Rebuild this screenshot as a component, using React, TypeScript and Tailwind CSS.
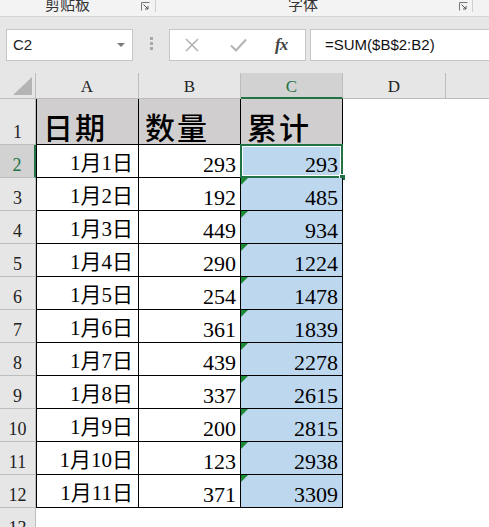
import React from "react";

const ROWS: [string, number, number][] = [
  ["1月1日", 293, 293],
  ["1月2日", 192, 485],
  ["1月3日", 449, 934],
  ["1月4日", 290, 1224],
  ["1月5日", 254, 1478],
  ["1月6日", 361, 1839],
  ["1月7日", 439, 2278],
  ["1月8日", 337, 2615],
  ["1月9日", 200, 2815],
  ["1月10日", 123, 2938],
  ["1月11日", 371, 3309],
];

const serif = "font-['Liberation_Serif','Noto_Sans_CJK_SC',serif]";
const sans = "font-['Liberation_Sans','Noto_Sans_CJK_SC',sans-serif]";

function Launcher() {
  return (
    <svg width="9" height="9" viewBox="0 0 9 9" className="shrink-0">
      <path d="M0.5 8.5V0.5H8.5" fill="none" stroke="#777" strokeWidth="1" />
      <path d="M2.5 2.5L7 7M7 4V7H4" fill="none" stroke="#555" strokeWidth="1" />
    </svg>
  );
}

function Ribbon() {
  return (
    <div className={`flex h-[17px] bg-[#f3f3f3] border-b border-[#d5d5d5] text-[15px] text-[#333] ${sans}`}>
      <div className="relative flex w-[156px] items-end border-r border-[#d0d0d0] h-[12px]">
        <span className="absolute left-[45px] -top-[3px] leading-none">剪贴板</span>
        <span className="ml-auto mr-[5px] mb-[1px]">
          <Launcher />
        </span>
      </div>
      <div className="relative flex w-[317px] items-end border-r border-[#d0d0d0] h-[12px]">
        <span className="absolute left-[132px] -top-[3px] leading-none">字体</span>
        <span className="ml-auto mr-[4px] mb-[1px]">
          <Launcher />
        </span>
      </div>
    </div>
  );
}

function FormulaBar() {
  return (
    <div className={`flex h-[56px] items-start bg-[#e6e6e6] pt-[12px] ${sans}`}>
      <div className="ml-[6px] flex h-[32px] w-[127px] items-center border border-[#c6c6c6] bg-white pl-[6px] pr-[6px]">
        <span className="text-[15px] text-[#222]">C2</span>
        <svg width="8" height="5" viewBox="0 0 8 5" className="ml-auto mr-[1px]">
          <path d="M0 0H8L4 4Z" fill="#7a7a7a" />
        </svg>
      </div>
      <div className="ml-[17px] mt-[8px] flex flex-col gap-[2px]">
        <span className="h-[3px] w-[3px] bg-[#a8a8a8]" />
        <span className="h-[3px] w-[3px] bg-[#a8a8a8]" />
        <span className="h-[3px] w-[3px] bg-[#a8a8a8]" />
      </div>
      <div className="ml-[16px] flex h-[32px] w-[137px] items-center border border-[#c6c6c6] bg-white">
        <svg width="14" height="14" viewBox="0 0 14 14" className="ml-[15px]">
          <path d="M1 1L13 13M13 1L1 13" stroke="#b3b3b3" strokeWidth="1.6" />
        </svg>
        <svg width="17" height="14" viewBox="0 0 17 14" className="ml-[31px]">
          <path d="M1 7.5L6 12.5L16 1.5" fill="none" stroke="#b3b3b3" strokeWidth="2" />
        </svg>
        <span className="ml-[28px] font-['Liberation_Serif',serif] italic text-[17px] font-semibold text-[#444] tracking-[-1px]">
          fx
        </span>
      </div>
      <div className="ml-[4px] flex h-[32px] flex-1 items-center border border-r-0 border-[#c6c6c6] bg-white pl-[14px]">
        <span className="text-[15px] text-[#111]">=SUM($B$2:B2)</span>
      </div>
    </div>
  );
}

function ColumnHeaders() {
  const cols = [
    { l: "A", w: "w-[103px]" },
    { l: "B", w: "w-[102px]" },
    { l: "C", w: "w-[102px]", sel: true },
    { l: "D", w: "w-[103px]" },
  ];
  return (
    <div className={`flex h-[26px] bg-[#e6e6e6] ${serif}`}>
      <div className="relative w-[36px] shrink-0 border-r border-b border-[#bdbdbd]">
        <svg width="19" height="18" viewBox="0 0 19 18" className="absolute right-[3px] bottom-[3px]">
          <path d="M19 0V18H0Z" fill="#b4b4b4" />
        </svg>
      </div>
      {cols.map((c) => (
        <div
          key={c.l}
          className={`${c.w} shrink-0 flex items-end justify-center pb-[1px] text-[17px] leading-none border-r border-[#bdbdbd] ${
            c.sel ? "bg-[#d2d2d2] border-b-2 border-b-[#217346] text-[#217346]" : "border-b text-[#222]"
          }`}
        >
          <span className={c.sel ? "pb-[1px]" : "pb-[2px]"}>{c.l}</span>
        </div>
      ))}
      <div className="flex-1 border-b border-[#bdbdbd]" />
    </div>
  );
}

function RowHeader({ n, h, sel }: { n: number; h: string; sel?: boolean }) {
  return (
    <div
      className={`${h} w-[36px] shrink-0 flex items-end justify-center pb-[3px] text-[18px] leading-none border-b border-[#bdbdbd] ${serif} ${
        sel ? "bg-[#d2d2d2] border-r-2 border-r-[#217346] text-[#217346]" : "bg-[#e6e6e6] border-r text-[#222]"
      }`}
    >
      {n}
    </div>
  );
}

function Triangle() {
  return (
    <span className="absolute left-0 top-0 h-0 w-0 border-t-[7px] border-r-[7px] border-t-[#1d8a35] border-r-transparent" />
  );
}

export default function App() {
  const cellBase = `shrink-0 flex items-end justify-end border-r border-b border-black text-[22px] leading-none text-black ${serif}`;
  return (
    <div className="relative h-[527px] w-[489px] overflow-hidden bg-white">
      <Ribbon />
      <FormulaBar />
      <ColumnHeaders />
      {/* row 1: titles */}
      <div className="flex h-[46px]">
        <RowHeader n={1} h="h-[46px]" />
        {["日期", "数量", "累计"].map((t, i) => (
          <div
            key={t}
            className={`${i === 0 ? "w-[103px] border-l" : "w-[102px]"} shrink-0 flex items-end border-r border-b border-black bg-[#d0cece] pl-[6px] pb-[3px] text-[30px] leading-none font-medium text-black tracking-[2px] font-['Noto_Sans_CJK_SC',sans-serif]`}
          >
            {t}
          </div>
        ))}
      </div>
      {ROWS.map(([d, q, s], i) => (
        <div key={d} className="flex h-[33px]">
          <RowHeader n={i + 2} h="h-[33px]" sel={i === 0} />
          <div className={`${cellBase} w-[103px] border-l pr-[5px] pb-[3px]`}>
            <span className="text-[21px]">{d}</span>
          </div>
          <div className={`${cellBase} w-[102px] pr-[4px] pb-[1px]`}>{q}</div>
          <div className={`${cellBase} relative w-[102px] bg-[#bdd7ee] pr-[4px] pb-[1px]`}>
            {i > 0 && <Triangle />}
            {i === 0 && (
              <>
                <span className="absolute -left-[1px] -top-[1px] -right-[1px] -bottom-[1px] border-2 border-[#217346]" />
                <span className="absolute left-[1px] top-[1px] right-[1px] bottom-[1px] border border-white" />
                <span className="absolute -right-[4px] -bottom-[4px] h-[7px] w-[7px] bg-[#217346] border border-white" />
              </>
            )}
            <span className="relative">{s}</span>
          </div>
        </div>
      ))}
      <div className="flex h-[33px]">
        <RowHeader n={13} h="h-[33px]" />
      </div>
    </div>
  );
}
